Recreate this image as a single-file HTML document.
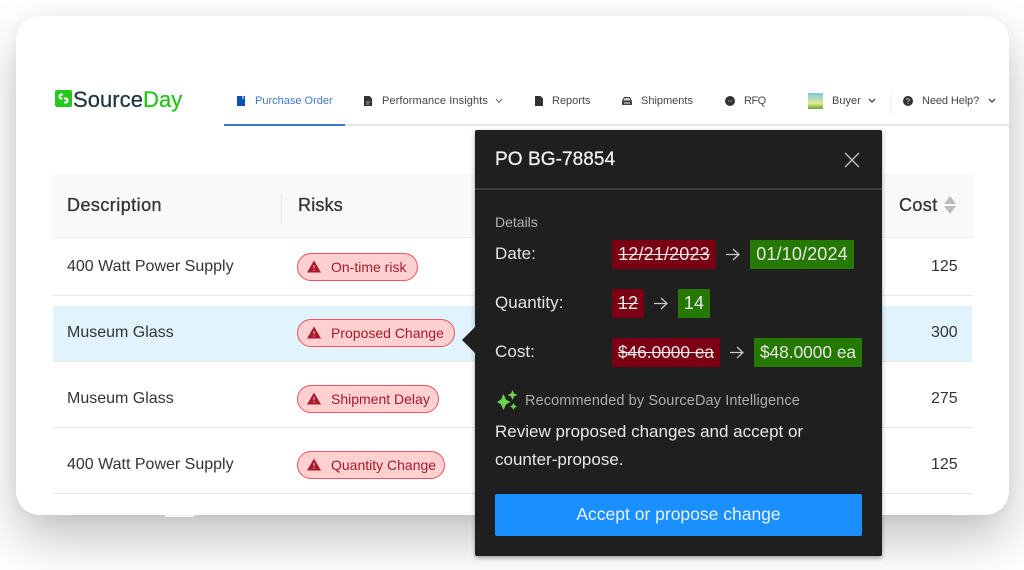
<!DOCTYPE html>
<html lang="en"><head><meta charset="utf-8"><title>SourceDay</title>
<style>
*{box-sizing:border-box}
html,body{margin:0;padding:0}
body{width:1024px;height:570px;overflow:hidden;background:#fff;font-family:"Liberation Sans",sans-serif;position:relative}
#wrap{position:absolute;left:0;top:0;width:1024px;height:570px;overflow:hidden;filter:blur(.3px)}
.a{position:absolute;white-space:nowrap}
#card{position:absolute;left:16px;top:16px;width:993px;height:499px;background:#fff;border-radius:24px;box-shadow:0 24px 50px rgba(0,0,0,.24),0 0 20px rgba(0,0,0,.05)}
.nav{font-size:11px;color:#444;top:95px;line-height:13px}
.row{font-size:16px;color:#333;line-height:20px}
.line{position:absolute;height:1px;background:#e9e9e9;left:52px;width:921px}
.pill{position:absolute;left:297px;height:28px;border:1.3px solid #f2505c;border-radius:14px;background:#ffd0d0;color:#a81b2c;font-size:14px;line-height:26px;padding-left:33px;white-space:nowrap}
.pill svg{position:absolute;left:9px;top:6px}
.tag{position:absolute;height:29px;line-height:28px;font-size:18px;letter-spacing:.15px;color:#e8e8e8;text-align:center;white-space:nowrap}
.r{background:#7b0014;text-decoration:line-through}
.g{background:#257800}
.lab{position:absolute;left:495px;font-size:17px;letter-spacing:.05px;color:#e4e4e4;line-height:20px}
.th{font-size:18px;line-height:22px;color:#333;-webkit-text-stroke:.3px #333;top:194px}
</style></head><body><div id="wrap">
<div id="card"></div>
<div class="a" style="left:165px;top:514px;width:29px;height:3px;background:#f8f8f8"></div>

<!-- logo -->
<svg class="a" style="left:55px;top:90px" width="17" height="17" viewBox="0 0 17 17"><rect width="17" height="17" rx="2" fill="#22c91a"/><path d="M8 3.5H6.5Q3.5 3.5 3.5 6.5T6.5 9.5H7.5V7.5H6.5Q5.5 7.5 5.5 6.5T6.5 5.5H8Z M9 7.5H10.5Q13.5 7.5 13.5 10.500T10.5 13.5H9V11.500H10.500Q11.500 11.500 11.500 10.500T10.500 9.500H9Z" fill="#fff"/></svg>
<div class="a" style="left:73px;top:86px;font-size:22px;line-height:28px;letter-spacing:.05px;color:#1f3540;-webkit-text-stroke:.25px #1f3540">Source<span style="color:#22c41a;-webkit-text-stroke:.25px #22c41a">Day</span></div>

<!-- nav -->
<div class="a" style="left:224px;top:124px;width:785px;height:2px;background:#e4e4e4"></div>
<div class="a" style="left:224px;top:124px;width:121px;height:2px;background:#3c78c8"></div>
<svg class="a" style="left:237px;top:96px" width="8" height="10"><path d="M0 0H8V10H0Z" fill="#0b4fb8"/><path d="M5 0V3H7V0Z" fill="#8fb0e0"/></svg>
<div class="a nav" style="left:255px;color:#3f7ac9">Purchase Order</div>
<svg class="a" style="left:364px;top:96px" width="8" height="10"><path d="M0 0H5.5L8 2.5V10H0Z" fill="#333"/><path d="M2 6H6M2 8H5" stroke="#ccc" stroke-width=".7"/></svg>
<div class="a nav" style="left:382px;letter-spacing:.1px">Performance Insights</div>
<svg class="a" style="left:495px;top:98px" width="8" height="6" fill="none"><path d="M1 1L4 4.5L7 1" stroke="#666"/></svg>
<svg class="a" style="left:535px;top:96px" width="8" height="10"><path d="M0 0H5.5L8 2.5V10H0Z" fill="#333"/></svg>
<div class="a nav" style="left:552px">Reports</div>
<svg class="a" style="left:622px;top:97px" width="10" height="9"><path d="M2 0H8L10 4V8H0V4Z" fill="#444"/><path d="M2.5 1.2H7.5L8.4 3.4H1.6Z" fill="#ddd"/><path d="M2 6H8" stroke="#ddd"/></svg>
<div class="a nav" style="left:641px">Shipments</div>
<svg class="a" style="left:725px;top:96px" width="10" height="10"><circle cx="5" cy="5" r="5" fill="#333"/><path d="M3 5H3.8M4.7 5H5.5M6.4 5H7.2" stroke="#ccc"/></svg>
<div class="a nav" style="left:744px;letter-spacing:-.5px">RFQ</div>
<div class="a" style="left:808px;top:93px;width:15px;height:16px;background:linear-gradient(180deg,#7cc7d8 0%,#b8e0b8 40%,#e6ec8a 65%,#5da53a 100%)"></div>
<div class="a nav" style="left:832px">Buyer</div>
<svg class="a" style="left:868px;top:98px" width="8" height="6" fill="none"><path d="M1 1L4 4L7 1" stroke="#444" stroke-width="1.3"/></svg>
<div class="a" style="left:890px;top:90px;width:1px;height:24px;background:#f0f0f0"></div>
<svg class="a" style="left:903px;top:96px" width="10" height="10"><circle cx="5" cy="5" r="5" fill="#333"/><path d="M3.7 4Q3.7 2.7 5 2.7T6.3 4Q6.3 4.8 5 5.5V6.2M5 7V8" stroke="#ccc" fill="none" stroke-width=".8"/></svg>
<div class="a nav" style="left:922px;letter-spacing:-.1px">Need Help?</div>
<svg class="a" style="left:988px;top:98px" width="8" height="6" fill="none"><path d="M1 1L4 4L7 1" stroke="#444" stroke-width="1.3"/></svg>

<!-- table -->
<div class="a" style="left:52px;top:174px;width:921px;height:64px;background:#f9f9f9;border-bottom:1px solid #eee"></div>
<div class="a" style="left:281px;top:194px;width:1px;height:30px;background:#e8e8e8"></div>
<div class="a th" style="left:67px;letter-spacing:.45px">Description</div>
<div class="a th" style="left:298px;letter-spacing:.2px">Risks</div>
<div class="a th" style="left:899px;letter-spacing:.4px">Cost</div>
<svg class="a" style="left:944px;top:195px" width="12" height="20"><path d="M6 1L12 9H0Z" fill="#bbb"/><path d="M6 19L12 11H0Z" fill="#bbb"/></svg>

<div class="a" style="left:53px;top:306px;width:919px;height:55px;background:#e1f4fd"></div>
<div class="line" style="top:295px"></div>
<div class="line" style="top:361px"></div>
<div class="line" style="top:427px"></div>
<div class="line" style="top:493px"></div>

<div class="a row" style="left:67px;top:257px">400 Watt Power Supply</div>
<div class="a row" style="left:67px;top:323px">Museum Glass</div>
<div class="a row" style="left:67px;top:389px">Museum Glass</div>
<div class="a row" style="left:67px;top:455px">400 Watt Power Supply</div>
<div class="a row" style="left:931px;top:257px">125</div>
<div class="a row" style="left:931px;top:323px">300</div>
<div class="a row" style="left:931px;top:389px">275</div>
<div class="a row" style="left:931px;top:455px">125</div>

<div class="pill" style="top:253px;width:121px">
<svg width="14" height="13"><path d="M7 0.5L14 12.5H0Z" fill="#a81b2c"/><path d="M7 5V8.3M7 9.5V10.7" stroke="#ffd0d0" stroke-width=".9"/></svg>On-time risk</div>
<div class="pill" style="top:319px;width:158px">
<svg width="14" height="13"><path d="M7 0.5L14 12.5H0Z" fill="#a81b2c"/><path d="M7 5V8.3M7 9.5V10.7" stroke="#ffd0d0" stroke-width=".9"/></svg>Proposed Change</div>
<div class="pill" style="top:385px;width:142px">
<svg width="14" height="13"><path d="M7 0.5L14 12.5H0Z" fill="#a81b2c"/><path d="M7 5V8.3M7 9.5V10.7" stroke="#ffd0d0" stroke-width=".9"/></svg>Shipment Delay</div>
<div class="pill" style="top:451px;width:148px">
<svg width="14" height="13"><path d="M7 0.5L14 12.5H0Z" fill="#a81b2c"/><path d="M7 5V8.3M7 9.5V10.7" stroke="#ffd0d0" stroke-width=".9"/></svg>Quantity Change</div>

<!-- popover -->
<div class="a" style="left:475px;top:130px;width:407px;height:426px;background:#1f1f1f;border-radius:2px;box-shadow:0 2px 5px rgba(0,0,0,.35)"></div>
<svg class="a" style="left:461px;top:324px" width="15" height="32"><path d="M15 2L1 16L15 30Z" fill="#1f1f1f"/></svg>
<div class="a" style="left:495px;top:148px;font-size:19px;line-height:24px;color:#f2f2f2;letter-spacing:.08px;-webkit-text-stroke:.25px #f2f2f2">PO BG-78854</div>
<svg class="a" style="left:844px;top:152px" width="16" height="16" fill="none"><path d="M1 1L15 15M15 1L1 15" stroke="#c0c0c0" stroke-width="1.4"/></svg>
<div class="a" style="left:475px;top:188px;width:407px;height:2px;background:#3c3c3c"></div>
<div class="a" style="left:495px;top:214px;font-size:14px;line-height:16px;color:#b4b4b4">Details</div>

<div class="lab a" style="top:244px">Date:</div>
<div class="tag r" style="left:612px;top:240px;width:104px">12/21/2023</div>
<svg class="a" style="left:726px;top:248px" width="14" height="13" fill="none"><path d="M0 6.5H13M7 1L13 6.5L7 12" stroke="#ccc" stroke-width="1.2"/></svg>
<div class="tag g" style="left:750px;top:240px;width:104px">01/10/2024</div>

<div class="lab a" style="top:293px">Quantity:</div>
<div class="tag r" style="left:612px;top:289px;width:32px">12</div>
<svg class="a" style="left:654px;top:297px" width="14" height="13" fill="none"><path d="M0 6.5H13M7 1L13 6.5L7 12" stroke="#ccc" stroke-width="1.2"/></svg>
<div class="tag g" style="left:678px;top:289px;width:32px">14</div>

<div class="lab a" style="top:342px">Cost:</div>
<div class="tag r" style="left:612px;top:338px;width:108px;font-size:17.3px;letter-spacing:0">$46.0000 ea</div>
<svg class="a" style="left:730px;top:346px" width="14" height="13" fill="none"><path d="M0 6.5H13M7 1L13 6.5L7 12" stroke="#ccc" stroke-width="1.2"/></svg>
<div class="tag g" style="left:754px;top:338px;width:108px;font-size:17.3px;letter-spacing:0">$48.0000 ea</div>

<svg class="a" style="left:497px;top:389px" width="21" height="21"><path d="M6.5 5L9 10.500L13.500 13L9 15.500L6.500 21L4 15.500L0 13L4 10.500Z" fill="#6ed04f"/><path d="M15.500 1L17 4.500L20.500 6L17 7.500L15.500 11L14 7.500L10.500 6L14 4.500Z" fill="#6ed04f"/><path d="M16.500 14L17.700 16.300L20 17.500L17.700 18.700L16.500 21L15.300 18.700L13 17.500L15.300 16.300Z" fill="#6ed04f"/></svg>
<div class="a" style="left:525px;top:392px;font-size:14.5px;line-height:18px;letter-spacing:.11px;color:#adadad">Recommended by SourceDay Intelligence</div>
<div class="a" style="left:495px;top:418px;font-size:17px;line-height:27.5px;color:#e8e8e8;width:370px">Review proposed changes and accept or<br>counter-propose.</div>
<div class="a" style="left:495px;top:494px;width:367px;height:42px;background:#1a8fff;border-radius:2px;text-align:center;line-height:40px;font-size:17.5px;color:#e6f2ff">Accept or propose change</div>
</div></body></html>
